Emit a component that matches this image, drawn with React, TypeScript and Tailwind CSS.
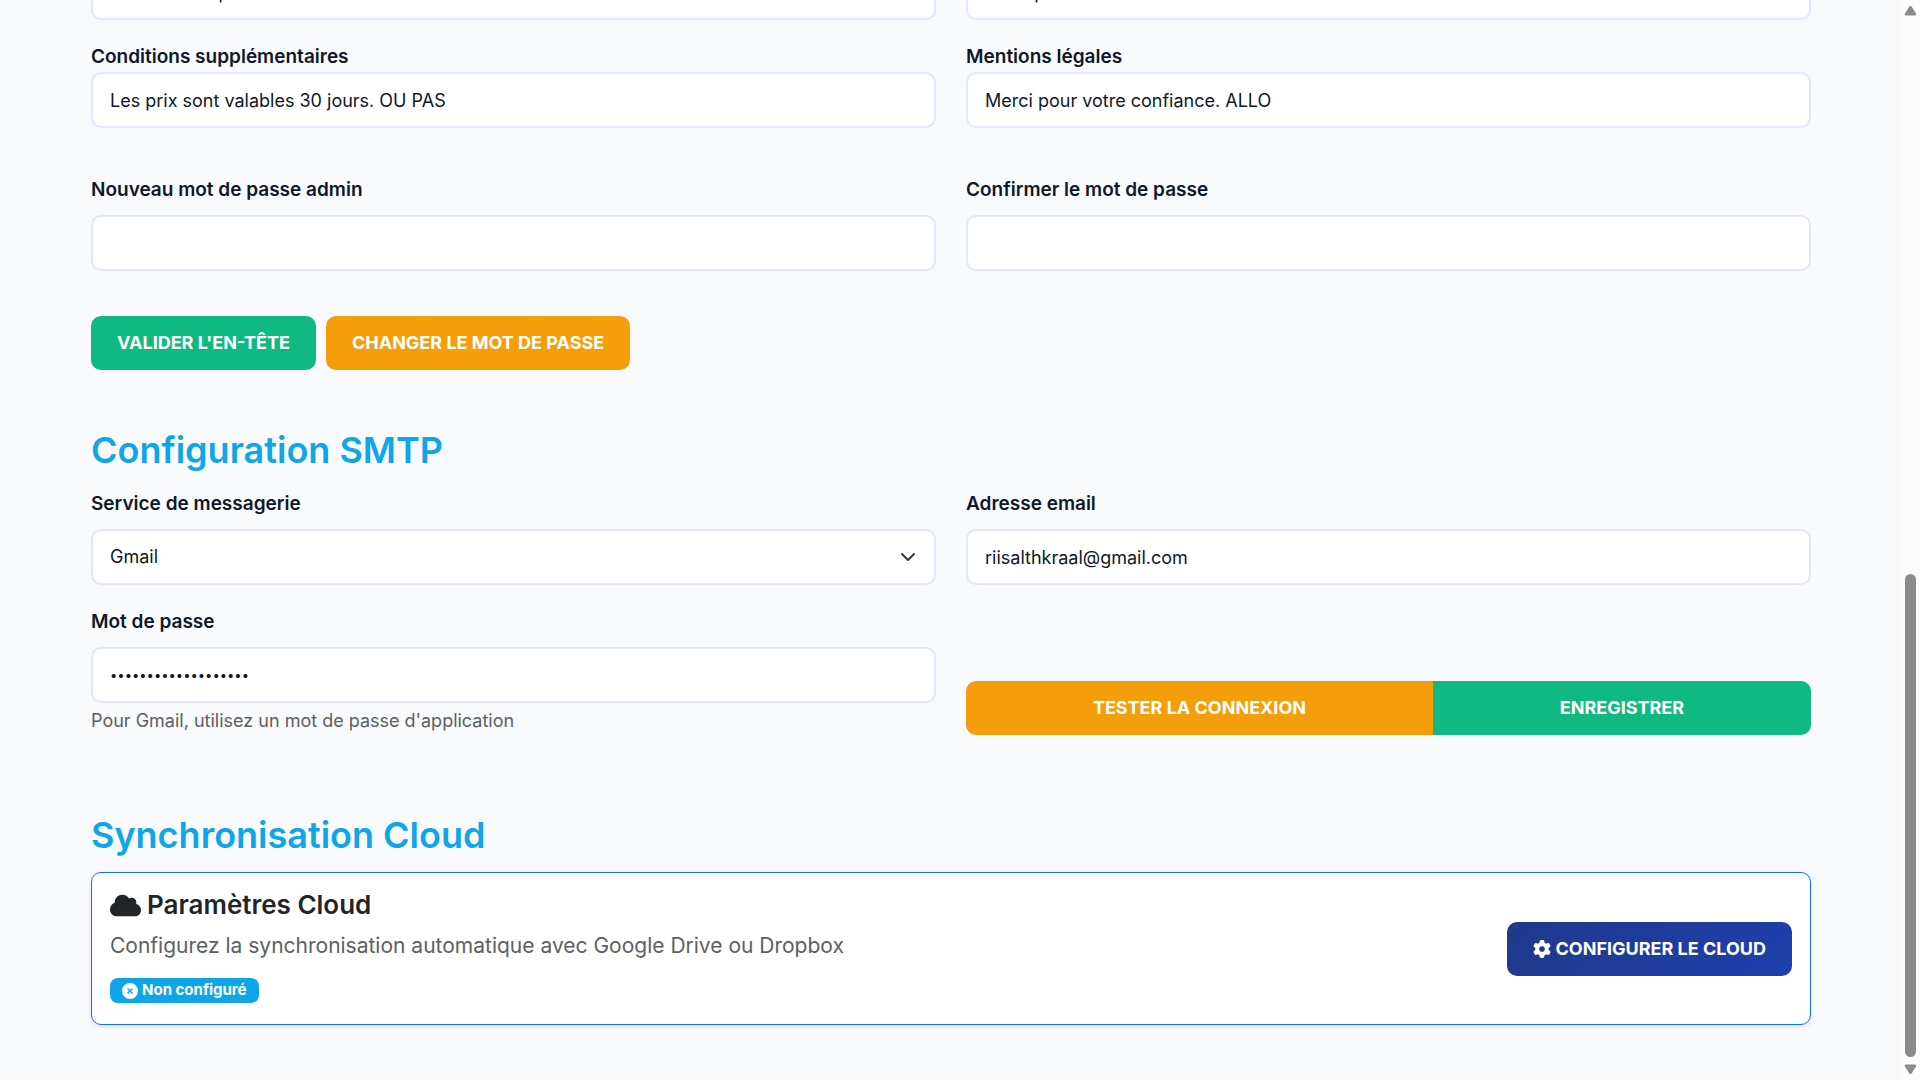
import type { ReactNode } from "react";
import { FaCircleXmark, FaCloud, FaGear } from "react-icons/fa6";

const boxClass =
  "block h-14 w-full rounded-[10px] border-2 border-[#e0e7ff] bg-white px-[17px] text-[#0f172a] outline-none";

const fieldClass = `${boxClass} text-lg`;

const buttonClass =
  "h-[54px] rounded-[10px] px-[26px] text-lg font-bold uppercase text-white";

type FieldProps = {
  id: string;
  label: string;
  compact?: boolean;
  children: ReactNode;
};

function Field({ id, label, compact = false, children }: FieldProps) {
  return (
    <div className={compact ? "flex flex-col gap-px" : "flex flex-col gap-[11px]"}>
      <label htmlFor={id} className="text-[19px] leading-7 font-semibold text-[#0f172a]">
        {label}
      </label>
      {children}
    </div>
  );
}

function SectionTitle({ children }: { children: ReactNode }) {
  return <h2 className="text-4xl leading-11 font-semibold text-[#0ea5e9]">{children}</h2>;
}

function Scrollbar() {
  return (
    <div aria-hidden="true" className="flex w-[19px] shrink-0 flex-col items-center bg-[#fcfcfc] py-[5px]">
      <svg width="13" height="11" viewBox="0 0 13 11" fill="#8b8b8b">
        <path d="M5.4 1.6Q6.5 .2 7.6 1.6L12 8.4Q12.7 10.4 11 10.5H2Q.3 10.4 1 8.4Z" />
      </svg>
      <div className="flex min-h-0 w-[11px] flex-1 flex-col justify-end pb-[7px]">
        <div className="h-[46.4%] rounded-full bg-[#8b8b8b]" />
      </div>
      <svg width="13" height="11" viewBox="0 0 13 11" fill="#8b8b8b">
        <path d="M5.4 9.4Q6.5 10.8 7.6 9.4L12 2.6Q12.7 .6 11 .5H2Q.3 .6 1 2.6Z" />
      </svg>
    </div>
  );
}

export default function App() {
  return (
    <div className="flex h-screen overflow-hidden bg-[#f9fafc] font-['Inter',sans-serif]">
      <main className="min-w-0 flex-1 overflow-hidden pr-[90px] pl-[91px]">
        <form className="-mt-9" onSubmit={(e) => e.preventDefault()}>
          <div className="grid grid-cols-2 gap-x-[30px] gap-y-[23px]">
            <input aria-label="Conditions de paiement" className={fieldClass} defaultValue="30% d'acompte" />
            <input aria-label="Acompte" className={fieldClass} defaultValue="Acompte" />
            <Field id="conditions" label="Conditions supplémentaires" compact>
              <input id="conditions" className={fieldClass} defaultValue="Les prix sont valables 30 jours. OU PAS" />
            </Field>
            <Field id="mentions" label="Mentions légales" compact>
              <input id="mentions" className={fieldClass} defaultValue="Merci pour votre confiance. ALLO" />
            </Field>
          </div>
          <div className="mt-12 grid grid-cols-2 gap-x-[30px]">
            <Field id="new-password" label="Nouveau mot de passe admin">
              <input id="new-password" type="password" className={fieldClass} />
            </Field>
            <Field id="confirm-password" label="Confirmer le mot de passe">
              <input id="confirm-password" type="password" className={fieldClass} />
            </Field>
          </div>
          <div className="mt-[45px] flex gap-[10px]">
            <button type="button" className={`${buttonClass} bg-[#10b981]`}>Valider l'en-tête</button>
            <button type="button" className={`${buttonClass} bg-[#f59e0b]`}>Changer le mot de passe</button>
          </div>
        </form>

        <section className="mt-[58px]">
          <SectionTitle>Configuration SMTP</SectionTitle>
          <form className="mt-[18px] grid grid-cols-2 gap-x-[30px] gap-y-[23px]" onSubmit={(e) => e.preventDefault()}>
            <Field id="service" label="Service de messagerie">
              <div className="relative">
                <select id="service" className={`${fieldClass} appearance-none`} defaultValue="Gmail">
                  <option>Gmail</option>
                </select>
                <svg
                  className="pointer-events-none absolute top-5 right-5 size-4"
                  viewBox="0 0 16 16"
                  fill="none"
                  stroke="#343a40"
                  strokeWidth="2"
                  strokeLinecap="round"
                  strokeLinejoin="round"
                >
                  <path d="m2 5 6 6 6-6" />
                </svg>
              </div>
            </Field>
            <Field id="email" label="Adresse email">
              <input id="email" type="email" className={fieldClass} defaultValue="riisalthkraal@gmail.com" />
            </Field>
            <div>
              <Field id="smtp-password" label="Mot de passe">
                <input
                  id="smtp-password"
                  type="password"
                  className={`${boxClass} text-[13px]`}
                  defaultValue="abcdefghijklmnopqrs"
                />
              </Field>
              <p className="mt-1 text-lg leading-7 text-[#5c6065]">Pour Gmail, utilisez un mot de passe d'application</p>
            </div>
            <div className="flex self-end">
              <button type="button" className={`${buttonClass} flex-auto rounded-r-none bg-[#f59e0b]`}>
                Tester la connexion
              </button>
              <button type="submit" className={`${buttonClass} flex-auto rounded-l-none bg-[#10b981]`}>
                Enregistrer
              </button>
            </div>
          </form>
        </section>

        <section className="mt-[78px]">
          <SectionTitle>Synchronisation Cloud</SectionTitle>
          <div className="mt-[15px] flex items-center justify-between rounded-[10px] border border-[#0d6efd] bg-white p-[18px] shadow-[0_2px_5px_rgba(30,58,138,0.1)]">
            <div>
              <h3 className="flex items-center gap-[6px] text-[26px] leading-7 font-semibold text-[#212529]">
                <FaCloud className="h-[25px] w-[31px]" />
                Paramètres Cloud
              </h3>
              <p className="mt-3 text-[21px] leading-[30px] text-[#5c6065]">
                Configurez la synchronisation automatique avec Google Drive ou Dropbox
              </p>
              <span className="mt-[17px] mb-[3px] flex h-[25px] w-fit items-center gap-1 rounded-lg bg-[#0ea5e9] px-3 text-[15px] font-bold text-white">
                <FaCircleXmark className="size-4" />
                Non configuré
              </span>
            </div>
            <button
              type="button"
              className={`${buttonClass} flex items-center gap-[5px] bg-linear-135 from-[#1e3a8a] to-[#1e40af]`}
            >
              <FaGear className="size-[18px]" />
              Configurer le cloud
            </button>
          </div>
        </section>
      </main>
      <Scrollbar />
    </div>
  );
}
